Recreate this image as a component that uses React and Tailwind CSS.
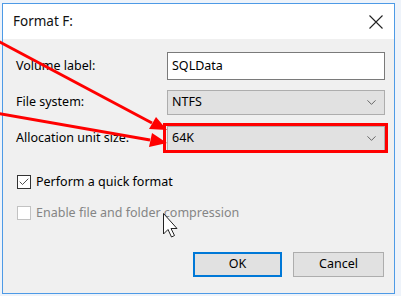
import { Check, ChevronDown } from "lucide-react";

const font = { fontFamily: '"Noto Sans", "Open Sans", sans-serif' };

function SelectBox({ value }) {
  return (
    <div className="flex items-center justify-between w-[218px] h-[25px] bg-[#e1e1e1] border border-[#adadad] pl-[4px] pr-[5px]">
      <span>{value}</span>
      <ChevronDown size={15} strokeWidth={1.3} className="text-[#4a4a4a]" />
    </div>
  );
}

function Row({ label, children }) {
  return (
    <div className="flex items-center justify-between h-[26px]">
      <span>{label}</span>
      {children}
    </div>
  );
}

export default function App() {
  return (
    <div className="relative w-[401px] h-[296px] overflow-hidden bg-[#eef3fa] text-[12.5px] text-black" style={font}>
      {/* window */}
      <div className="ml-[2px] mt-[3px] w-[393px] h-[291px] border border-[#4d9ae6] flex flex-col">
        <div className="h-[35px] bg-white flex items-center justify-between pl-[10px] pr-[8px]">
          <span className="text-[13.5px] text-[#111]">Format F:</span>
          <svg width="16" height="16" viewBox="0 0 16 16" className="mr-[2px]">
            <path d="M1.5 1.5 L14.5 14.5 M14.5 1.5 L1.5 14.5" stroke="#222" strokeWidth="1.1" />
          </svg>
        </div>

        <div className="flex-1 bg-[#f0f0f0] pl-[13px] pr-[9px] pt-[14px] flex flex-col">
          <div className="flex flex-col gap-[10px]">
            <Row label="Volume label:">
              <div className="flex items-center w-[218px] h-[28px] bg-white border border-[#7a7a7a] pl-[4px]">
                SQLData
              </div>
            </Row>
            <Row label="File system:">
              <SelectBox value="NTFS" />
            </Row>
            <Row label="Allocation unit size:">
              <SelectBox value="64K" />
            </Row>
          </div>

          <div className="mt-[22px] flex items-center gap-[5px] pl-[1px]">
            <div className="w-[14px] h-[14px] bg-white border border-[#333] flex items-center justify-center">
              <Check size={12} strokeWidth={1.6} className="text-[#222]" />
            </div>
            <span>Perform a quick format</span>
          </div>
          <div className="mt-[12px] flex items-center gap-[5px] pl-[1px] text-[#858585]">
            <div className="w-[14px] h-[14px] bg-white border border-[#c2c2c2]" />
            <span>Enable file and folder compression</span>
          </div>

          <div className="mt-auto mb-[16px] flex justify-end gap-[11px] pr-[1px]">
            <div className="w-[89px] h-[25px] bg-[#e1e1e1] border-2 border-[#0078d7] flex items-center justify-center">
              OK
            </div>
            <div className="w-[91px] h-[25px] bg-[#e1e1e1] border border-[#adadad] flex items-center justify-center">
              Cancel
            </div>
          </div>
        </div>
      </div>

      {/* annotations */}
      <svg className="absolute inset-0 pointer-events-none" width="401" height="296" viewBox="0 0 401 296">
        <rect x="164.5" y="124.5" width="222" height="27" fill="none" stroke="#ff0000" strokeWidth="3" />
        <line x1="-4" y1="40" x2="152" y2="123" stroke="#ff0000" strokeWidth="3" />
        <polygon points="167,130 149,129 156,117" fill="#ff0000" />
        <line x1="-4" y1="113" x2="150" y2="140" stroke="#ff0000" strokeWidth="3" />
        <polygon points="167,143 149,147 152,133" fill="#ff0000" />
        {/* mouse cursor */}
        <path
          d="M163.5 213.5 L163.5 234 L168 229.5 L171.5 237 L174.5 235.5 L171 228.5 L177 228.5 Z"
          fill="#fff"
          stroke="#222"
          strokeWidth="1"
          strokeLinejoin="round"
        />
      </svg>
    </div>
  );
}
